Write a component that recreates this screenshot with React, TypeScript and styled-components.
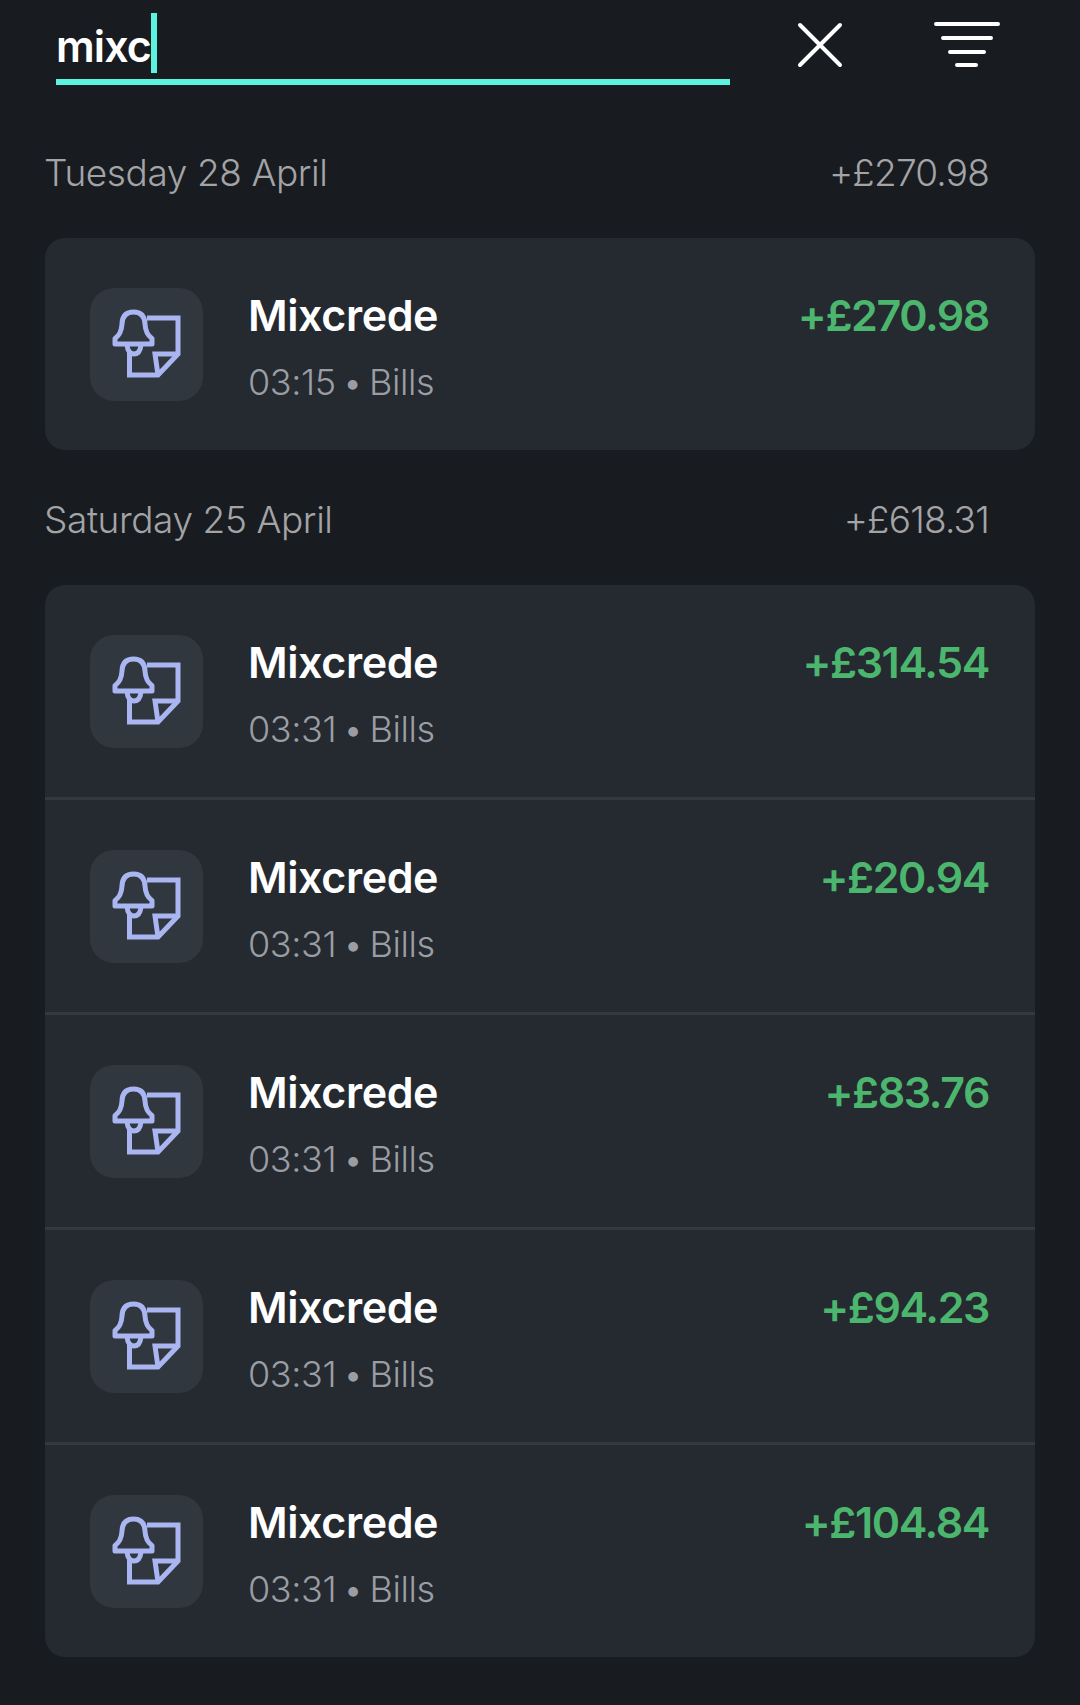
import styled, { createGlobalStyle } from "styled-components";

const GlobalStyle = createGlobalStyle`
    html, body {
        margin: 0;
        padding: 0;
        background: #181b20;
    }
    body {
        font-family: "Inter", "Liberation Sans", sans-serif;
        -webkit-font-smoothing: antialiased;
    }
`;

const Page = styled.div`
    width: 1080px;
    height: 1705px;
    overflow: hidden;
    background: #181b20;
`;

const SearchBar = styled.div`
    display: flex;
    align-items: flex-start;
    padding: 13px 0 0 56px;
    height: 137px;
    box-sizing: border-box;
`;

const SearchField = styled.div`
    width: 674px;
    height: 72px;
    box-sizing: border-box;
    border-bottom: 6px solid #5cf3df;
    display: flex;
    align-items: flex-start;
`;

const SearchText = styled.span`
    font-size: 43px;
    font-weight: 600;
    line-height: 60px;
    color: #fff;
    letter-spacing: -0.9px;
    padding-top: 3px;
    height: 57px;
`;

const Caret = styled.span`
    width: 6px;
    height: 60px;
    background: #5cf3df;
    flex: none;
`;

const CloseIcon = styled.svg`
    width: 46px;
    height: 46px;
    margin: 9px 0 0 67px;
    flex: none;
`;

const FilterIcon = styled.svg`
    width: 66px;
    height: 46px;
    margin: 9px 0 0 91px;
    flex: none;
`;

const DayHeader = styled.div`
    display: flex;
    justify-content: space-between;
    align-items: center;
    margin: 0 91px 0 44px;
    height: 70px;
    font-size: 37px;
    font-weight: 300;
    color: #a3a4a6;
`;

const DayDate = styled.span`
    letter-spacing: -0.4px;
`;

const DayTotal = styled.span`
    letter-spacing: -0.8px;
`;

const Card = styled.div`
    margin: 31px 45px 0;
    background: #252930;
    border-radius: 20px;
    overflow: hidden;
`;

const Row = styled.div`
    display: flex;
    align-items: flex-start;
    height: 212px;
    box-sizing: border-box;
    padding: 50px 46px 0 45px;
    & + & {
        height: 215px;
        border-top: 3px solid #323941;
    }
`;

const IconTile = styled.div`
    width: 113px;
    height: 113px;
    border-radius: 24px;
    background: #31373e;
    display: flex;
    flex: none;
    svg {
        display: block;
    }
`;

const RowText = styled.div`
    flex: 1;
    margin-left: 45px;
`;

const Title = styled.div`
    font-size: 43px;
    line-height: 52px;
    font-weight: 600;
    color: #fff;
    letter-spacing: -0.4px;
    margin-top: 1px;
`;

const Meta = styled.div`
    font-size: 36px;
    line-height: 44px;
    font-weight: 300;
    color: #9a9ea4;
    letter-spacing: -0.4px;
    word-spacing: -3px;
    margin-top: 19px;
`;

const Amount = styled.div`
    font-size: 43px;
    line-height: 52px;
    font-weight: 600;
    color: #4cb56e;
    letter-spacing: -1.4px;
    margin-top: 1px;
`;

const BillIcon = () => (
    <svg width="113" height="113" viewBox="20 19 113 113" fill="none" stroke="#aab6f2" strokeWidth="5">
        <path d="M77 49H108V85L88 106H59.5V84" />
        <path d="M108 85H85L88 106" />
        <path strokeLinejoin="round" d="M45 75V69.5Q51.5 65 52 55Q52.5 43 63.5 43Q74.5 43 75 55Q75.5 65 82 69.5V75Z" />
        <path d="M57 76Q58 85 64 85Q70 85 71 76" />
    </svg>
);

type Tx = { time: string; amount: string };

const days: { date: string; total: string; items: Tx[] }[] = [
    {
        date: "Tuesday 28 April",
        total: "+£270.98",
        items: [{ time: "03:15", amount: "+£270.98" }],
    },
    {
        date: "Saturday 25 April",
        total: "+£618.31",
        items: [
            { time: "03:31", amount: "+£314.54" },
            { time: "03:31", amount: "+£20.94" },
            { time: "03:31", amount: "+£83.76" },
            { time: "03:31", amount: "+£94.23" },
            { time: "03:31", amount: "+£104.84" },
        ],
    },
];

const DayGroup = styled.section`
    & + & {
        margin-top: 34px;
    }
`;

const App = () => {
    return (
        <Page>
            <GlobalStyle />
            <SearchBar>
                <SearchField>
                    <SearchText>mixc</SearchText>
                    <Caret />
                </SearchField>
                <CloseIcon viewBox="0 0 46 46" fill="none" stroke="#fff" strokeWidth="4" strokeLinecap="round">
                    <path d="M3 3L43 43M43 3L3 43" />
                </CloseIcon>
                <FilterIcon viewBox="0 0 66 46" fill="none" stroke="#fff" strokeWidth="4" strokeLinecap="round">
                    <path d="M2 2H64M9 16H57M16 30H50M23 43H42" />
                </FilterIcon>
            </SearchBar>
            {days.map((day) => (
                <DayGroup key={day.date}>
                    <DayHeader>
                        <DayDate>{day.date}</DayDate>
                        <DayTotal>{day.total}</DayTotal>
                    </DayHeader>
                    <Card>
                        {day.items.map((tx, i) => (
                            <Row key={i}>
                                <IconTile>
                                    <BillIcon />
                                </IconTile>
                                <RowText>
                                    <Title>Mixcrede</Title>
                                    <Meta>{tx.time} • Bills</Meta>
                                </RowText>
                                <Amount>{tx.amount}</Amount>
                            </Row>
                        ))}
                    </Card>
                </DayGroup>
            ))}
        </Page>
    );
};

export default App;
